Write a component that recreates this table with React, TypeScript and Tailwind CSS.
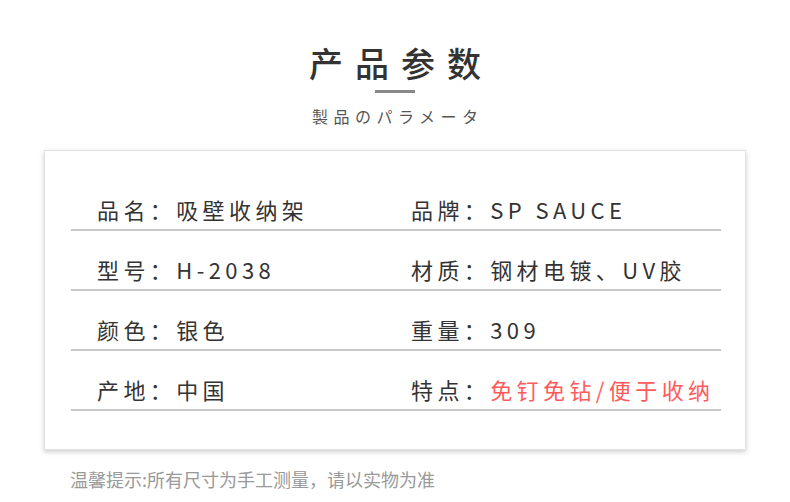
import React from "react";

interface Spec {
  label: string;
  value: string;
  accent?: boolean;
}

const rows: [Spec, Spec][] = [
  [
    { label: "品名", value: "吸壁收纳架" },
    { label: "品牌", value: "SP SAUCE" },
  ],
  [
    { label: "型号", value: "H-2038" },
    { label: "材质", value: "钢材电镀、UV胶" },
  ],
  [
    { label: "颜色", value: "银色" },
    { label: "重量", value: "309" },
  ],
  [
    { label: "产地", value: "中国" },
    { label: "特点", value: "免钉免钻/便于收纳", accent: true },
  ],
];

const font = {
  fontFamily: '"Noto Sans CJK SC", "Noto Sans", sans-serif',
};

const Cell = ({ spec, width }: { spec: Spec; width?: string }) => (
  <div
    className={`${width ?? ""} shrink-0 text-[22px] leading-none tracking-[4.4px] text-[#333] whitespace-nowrap`}
  >
    {spec.label}：
    <span className={spec.accent ? "text-[#ff5b5b]" : ""}>{spec.value}</span>
  </div>
);

function App() {
  return (
    <div className="w-[790px] h-[502px] bg-white overflow-hidden" style={font}>
      <div className="flex flex-col items-center pt-[46px]">
        <h1 className="text-[34px] leading-none font-medium tracking-[12px] pl-[12px] text-[#333]">
          产品参数
        </h1>
        <div className="mt-[10px] w-[40px] h-[3px] bg-[#888]" />
        <p className="mt-[15px] text-[16px] leading-none tracking-[5.5px] pl-[5.5px] text-[#555]">
          製品のパラメータ
        </p>
      </div>

      <div className="ml-[44px] mt-[26px] w-[702px] h-[300px] bg-white border border-[#e2e2e2] shadow-[0_2px_5px_rgba(0,0,0,0.2)] pl-[26px] pt-[20px]">
        {rows.map(([left, right], i) => (
          <div
            key={i}
            className="w-[650px] h-[60px] flex items-end pb-[9px] pl-[26px] border-b-2 border-[#c8c8c8]"
          >
            <Cell spec={left} width="w-[314px]" />
            <Cell spec={right} />
          </div>
        ))}
      </div>

      <p className="ml-[70px] mt-[20px] text-[18px] leading-none text-[#999]">
        温馨提示:所有尺寸为手工测量，请以实物为准
      </p>
    </div>
  );
}

export default App;
